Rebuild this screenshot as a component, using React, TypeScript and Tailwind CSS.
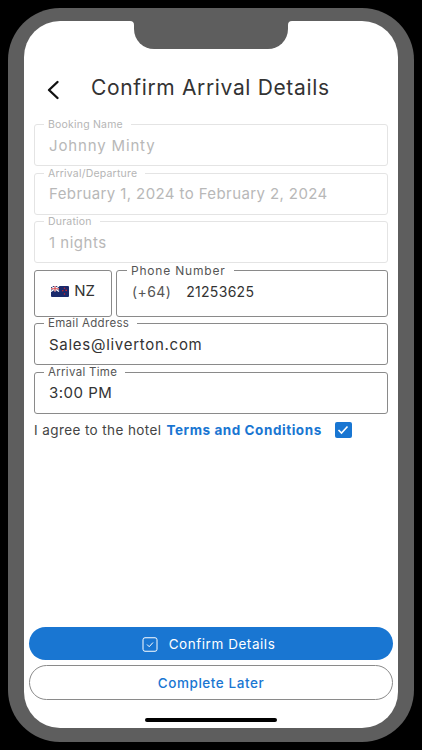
import { ReactNode } from 'react';

const font = { fontFamily: 'Inter, "Open Sans", sans-serif' };

function Field({
  label,
  children,
  disabled,
  className,
  labelClassName,
}: {
  label: string;
  children: ReactNode;
  disabled?: boolean;
  className?: string;
  labelClassName?: string;
}) {
  return (
    <div
      className={`relative flex items-center rounded-[3px] border ${
        disabled ? 'border-[#e4e4e4]' : 'border-[#8a8a8a]'
      } ${className ?? 'h-[42px] pt-[2px]'}`}
    >
      <span
        className={`absolute -top-[7px] left-[9px] bg-white px-1 pr-2 leading-[13px] ${
          disabled ? 'text-[#b5b5b5]' : 'text-[#555]'
        } ${labelClassName ?? (disabled ? 'text-[10.5px] tracking-[0.2px]' : 'text-[11.5px] tracking-[0.3px]')}`}
      >
        {label}
      </span>
      {children}
    </div>
  );
}

function NzFlag() {
  return (
    <svg width="18" height="11" viewBox="0 0 18 11" className="shrink-0">
      <rect width="18" height="11" rx="1" fill="#1a2a6c" />
      <path d="M0 0l8 5.5M8 0L0 5.5" stroke="#fff" strokeWidth="1.3" />
      <path d="M4 0v5.5M0 2.75h8" stroke="#fff" strokeWidth="1.6" />
      <path d="M4 0v5.5M0 2.75h8" stroke="#d2232a" strokeWidth="0.8" />
      <circle cx="13.5" cy="2.2" r="0.8" fill="#d2232a" />
      <circle cx="11.8" cy="4.8" r="0.8" fill="#d2232a" />
      <circle cx="15.2" cy="4.4" r="0.8" fill="#d2232a" />
      <circle cx="13.5" cy="8" r="0.8" fill="#d2232a" />
    </svg>
  );
}

export default function App() {
  return (
    <div className="h-[750px] w-[422px] overflow-hidden bg-black px-2 pt-2" style={font}>
      <div className="h-[734px] w-[406px] rounded-[52px] bg-[#5e5e5e] px-4 pt-[13px]">
        <div className="relative flex h-[707px] w-[374px] flex-col rounded-[36px] bg-white">
          {/* notch */}
          <div className="absolute left-[110px] top-0 h-[28px] w-[154px] rounded-b-[20px] bg-[#5e5e5e]" />
          <svg width="4" height="4" viewBox="0 0 4 4" className="absolute left-[106px] top-0">
            <path d="M0 0h4v4a4 4 0 0 0-4-4z" fill="#5e5e5e" />
          </svg>
          <svg width="4" height="4" viewBox="0 0 4 4" className="absolute left-[264px] top-0">
            <path d="M4 0H0v4a4 4 0 0 1 4-4z" fill="#5e5e5e" />
          </svg>

          <div className="flex h-[103px] items-end pb-[23px]">
            <svg width="14" height="20" viewBox="0 0 14 20" className="ml-[22px] mb-[1px]">
              <path d="M11.5 2L3 10l8.5 8" fill="none" stroke="#111" strokeWidth="2.4" strokeLinecap="round" strokeLinejoin="round" />
            </svg>
            <h1 className="ml-[31px] text-[21px] font-normal leading-[26px] tracking-[0.65px] text-[#333]">
              Confirm Arrival Details
            </h1>
          </div>

          <div className="flex flex-col gap-[6.5px] px-[10px]">
            <Field label="Booking Name" disabled>
              <span className="pl-[14px] text-[15px] tracking-[0.85px] text-[#b8b8b8]">Johnny Minty</span>
            </Field>
            <Field label="Arrival/Departure" disabled>
              <span className="pl-[14px] text-[15px] tracking-[0.4px] text-[#b8b8b8]">February 1, 2024 to February 2, 2024</span>
            </Field>
            <Field label="Duration" disabled>
              <span className="pl-[14px] text-[15px] tracking-[0.5px] text-[#b8b8b8]">1 nights</span>
            </Field>
            <div className="flex gap-[4px]">
              <div className="flex h-[47px] w-[78px] items-center justify-center gap-[5px] rounded-[3px] border border-[#8a8a8a] pb-[3px]">
                <NzFlag />
                <span className="text-[15px] text-[#333]">NZ</span>
              </div>
              <Field label="Phone Number" className="h-[47px] flex-1 pb-[3px]" labelClassName="text-[12px] tracking-[0.8px] ml-[1px]">
                <span className="pl-[15px] text-[14px] tracking-[0.4px] text-[#555]">(+64)</span>
                <span className="pl-[15px] text-[14px] tracking-[0.3px] text-[#333]">21253625</span>
              </Field>
            </div>
            <Field label="Email Address">
              <span className="pl-[14px] text-[15px] tracking-[0.72px] text-[#333]">Sales@liverton.com</span>
            </Field>
            <Field label="Arrival Time">
              <span className="pl-[14px] text-[15px] tracking-[0.5px] text-[#333]">3:00 PM</span>
            </Field>
            <div className="flex h-[20px] items-center">
              <span className="text-[13.5px] tracking-[0.4px] text-[#444]">I agree to the hotel</span>
              <span className="ml-[5px] text-[13.5px] font-bold tracking-[0.55px] text-[#1976d2]">Terms and Conditions</span>
              <span className="ml-[13px] flex h-[16px] w-[17px] items-center justify-center rounded-[2px] bg-[#1976d2]">
                <svg width="12" height="10" viewBox="0 0 12 10">
                  <path d="M1.5 5l3 3 6-6.5" fill="none" stroke="#fff" strokeWidth="1.6" />
                </svg>
              </span>
            </div>
          </div>

          <div className="mt-auto flex flex-col gap-[5px] px-[5px] pb-[28px]">
            <button className="flex h-[33px] items-center justify-center gap-[11px] rounded-full bg-[#1976d2] pt-[1px] pr-[5px] text-[13.5px] tracking-[0.55px] text-white">
              <svg width="16" height="15" viewBox="0 0 16 15">
                <rect x="1" y="0.75" width="14" height="13.5" rx="2" fill="none" stroke="#fff" strokeWidth="1" />
                <path d="M5 7.5l2.2 2.2L11 5.5" fill="none" stroke="#fff" strokeWidth="1" />
              </svg>
              Confirm Details
            </button>
            <button className="h-[35px] rounded-full border border-[#8a8a8a] pt-[1px] text-[13.5px] font-medium tracking-[0.55px] text-[#1976d2]">
              Complete Later
            </button>
          </div>

          {/* home indicator */}
          <div className="absolute bottom-[6px] left-[121px] h-[4px] w-[132px] rounded-full bg-black" />
        </div>
      </div>
    </div>
  );
}
